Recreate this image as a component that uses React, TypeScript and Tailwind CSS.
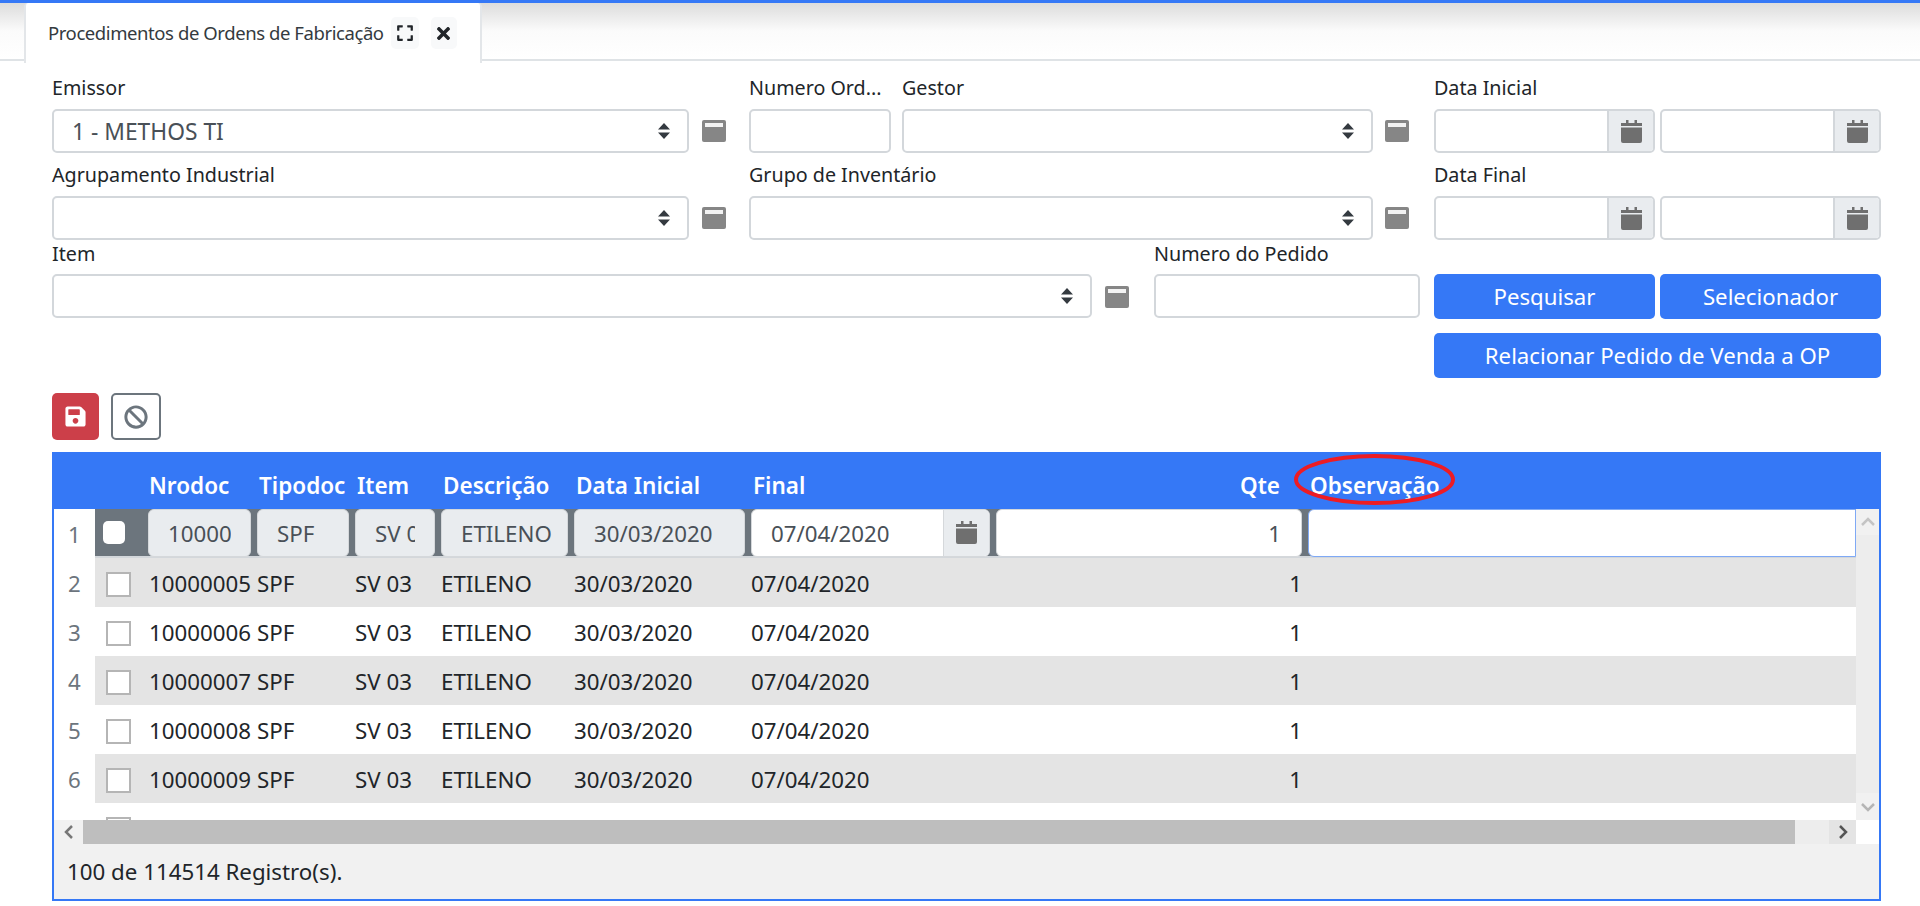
import { FaBan, FaExpand, FaSave, FaTimes } from 'react-icons/fa'

const font = { fontFamily: '"Noto Sans", "Open Sans", sans-serif' }

const SortArrows = () => (
    <svg width="12" height="16" viewBox="0 0 12 16" className="text-[#343a40]">
        <path d="M6 0 L12 6.5 L0 6.5 Z M0 9.5 L12 9.5 L6 16 Z" fill="currentColor" />
    </svg>
)

const PanelIcon = () => (
    <svg width="24" height="22" viewBox="0 0 24 22" className="shrink-0">
        <rect x="0" y="0" width="24" height="22" rx="2" fill="#868686" />
        <rect x="3" y="3" width="18" height="4" fill="#f3f3f3" />
    </svg>
)

const CalendarIcon = () => (
    <svg width="21" height="23" viewBox="0 0 21 23">
        <path
            d="M5 0h2.5v3H5zM13.5 0H16v3h-2.5zM0 3h21v3H0zM0 7.5h21V21a2 2 0 0 1-2 2H2a2 2 0 0 1-2-2z"
            fill="#6f6f6f"
        />
    </svg>
)

const Select = ({ width, value }: { width: string; value?: string }) => (
    <div
        className={`${width} flex h-[44px] shrink-0 items-center justify-between rounded-[5px] border-2 border-[#d3d7db] bg-white pl-[18px] pr-[17px] text-[22.8px] text-[#495057]`}
    >
        <span className="pt-[3px]">{value}</span>
        <SortArrows />
    </div>
)

const TextInput = ({ width }: { width: string }) => (
    <input
        readOnly
        className={`${width} h-[44px] shrink-0 rounded-[5px] border-2 border-[#d3d7db] bg-white`}
    />
)

const DateInput = () => (
    <div className="flex h-[44px] w-[221px] shrink-0 overflow-hidden rounded-[5px] border-2 border-[#d3d7db] bg-white">
        <div className="flex-1" />
        <div className="flex w-[46px] items-center justify-center border-l-2 border-[#d3d7db] bg-[#e9ecef]">
            <CalendarIcon />
        </div>
    </div>
)

const Label = ({ width, text, className }: { width: string; text: string; className: string }) => (
    <div className={`${width} ${className} shrink-0 whitespace-nowrap text-[19.7px] text-[#212529]`}>
        {text}
    </div>
)

const BlueButton = ({ width, text }: { width: string; text: string }) => (
    <button className={`${width} rounded-[5px] bg-[#3578f6] pt-[1px] text-[22.2px] text-white`}>
        {text}
    </button>
)

const rows = [
    { n: 2, doc: '10000005' },
    { n: 3, doc: '10000006' },
    { n: 4, doc: '10000007' },
    { n: 5, doc: '10000008' },
    { n: 6, doc: '10000009' },
    { n: 7, doc: '10000010' },
]

const cell = 'shrink-0 px-[3px]'
const readonlyInput =
    'h-[48px] w-full rounded-[6px] border border-[#d5d8db] bg-[#e9ecef] pl-[19px] pt-[2px] text-[22.3px] text-[#495057] outline-none'

export default function App() {
    return (
        <div className="h-[906px] w-[1920px] overflow-hidden bg-white" style={font}>
            {/* tab strip */}
            <div className="flex h-[61px] border-b-2 border-[#dfe3e6] border-t-[3px] border-t-[#3578f6] bg-gradient-to-b from-[#dcdcdc] via-[#fbfbfb] to-white pl-[24px]">
                <div className="-mb-[2px] flex h-[60px] w-[458px] items-center rounded-t-[4px] border-x-2 border-[#e3e6e9] bg-white pl-[22px]">
                    <span className="whitespace-nowrap text-[18.5px] tracking-[-0.42px] text-[#343a40]">
                        Procedimentos de Ordens de Fabricação
                    </span>
                    <span className="ml-[7px] flex h-[32px] w-[28px] items-center justify-center rounded-[5px] bg-[#f8f9fa]">
                        <FaExpand size={18} className="text-[#212529]" />
                    </span>
                    <span className="ml-[12px] flex h-[32px] w-[26px] items-center justify-center rounded-[5px] bg-[#f8f9fa]">
                        <FaTimes size={19} className="text-[#212529]" />
                    </span>
                </div>
            </div>

            {/* filters */}
            <div className="pl-[52px]">
                <div className="flex h-[48px] items-center pt-[6px]">
                    <Label width="w-[697px]" text="Emissor" className="" />
                    <Label width="w-[153px]" text="Numero Ord..." className="" />
                    <Label width="w-[532px]" text="Gestor" className="" />
                    <Label width="w-[221px]" text="Data Inicial" className="" />
                </div>
                <div className="flex items-center">
                    <Select width="w-[637px]" value="1 - METHOS TI" />
                    <span className="mx-[13px]"><PanelIcon /></span>
                    <span className="w-[10px]" />
                    <TextInput width="w-[142px]" />
                    <span className="w-[11px]" />
                    <Select width="w-[471px]" />
                    <span className="ml-[12px] mr-[25px]"><PanelIcon /></span>
                    <div className="flex gap-[5px]">
                        <DateInput />
                        <DateInput />
                    </div>
                </div>
                <div className="flex h-[43px] items-center">
                    <Label width="w-[697px]" text="Agrupamento Industrial" className="" />
                    <Label width="w-[685px]" text="Grupo de Inventário" className="" />
                    <Label width="w-[221px]" text="Data Final" className="" />
                </div>
                <div className="flex items-center">
                    <Select width="w-[637px]" />
                    <span className="mx-[13px]"><PanelIcon /></span>
                    <span className="w-[10px]" />
                    <Select width="w-[624px]" />
                    <span className="ml-[12px] mr-[25px]"><PanelIcon /></span>
                    <div className="flex gap-[5px]">
                        <DateInput />
                        <DateInput />
                    </div>
                </div>
                <div className="flex h-[34px] items-start">
                    <Label width="w-[1102px]" text="Item" className="-mt-[1px]" />
                    <Label width="w-[280px]" text="Numero do Pedido" className="-mt-[1px]" />
                </div>
                <div className="flex">
                    <Select width="w-[1040px]" />
                    <span className="ml-[13px] mr-[25px] mt-[12px]"><PanelIcon /></span>
                    <TextInput width="w-[266px]" />
                    <div className="ml-[14px] flex w-[447px] flex-col gap-[14px]">
                        <div className="flex h-[45px] gap-[5px]">
                            <BlueButton width="w-[221px]" text="Pesquisar" />
                            <BlueButton width="w-[221px]" text="Selecionador" />
                        </div>
                        <div className="flex h-[45px]">
                            <BlueButton width="w-full" text="Relacionar Pedido de Venda a OP" />
                        </div>
                    </div>
                </div>
            </div>

            {/* grid actions */}
            <div className="ml-[52px] mt-[15px] flex gap-[12px]">
                <button className="flex h-[47px] w-[47px] items-center justify-center rounded-[5px] bg-[#cc3f49]">
                    <FaSave size={23} className="text-white" />
                </button>
                <button className="flex h-[47px] w-[50px] items-center justify-center rounded-[5px] border-2 border-[#6c757d] bg-white">
                    <FaBan size={24} className="text-[#6c757d]" />
                </button>
            </div>

            {/* grid */}
            <div className="ml-[52px] mt-[12px] w-[1829px] border-2 border-t-0 border-[#3578f6] text-[22.3px]">
                <div className="flex h-[57px] items-end bg-[#3578f6] pb-[6px] text-[22.5px] font-semibold text-white">
                    <div className="w-[91px] shrink-0" />
                    <div className="w-[109px] shrink-0 pl-[4px]">Nrodoc</div>
                    <div className="w-[98px] shrink-0 pl-[5px]">Tipodoc</div>
                    <div className="w-[86px] shrink-0 pl-[5px]">Item</div>
                    <div className="w-[133px] shrink-0 pl-[5px]">Descrição</div>
                    <div className="w-[177px] shrink-0 pl-[5px]">Data Inicial</div>
                    <div className="w-[245px] shrink-0 pl-[5px]">Final</div>
                    <div className="w-[312px] shrink-0 pr-[25px] text-right">Qte</div>
                    <div className="relative pl-[5px]">
                        Observação
                        <svg
                            width="161"
                            height="51"
                            viewBox="0 0 161 51"
                            className="absolute -left-[11px] -top-[15px]"
                        >
                            <ellipse cx="80.5" cy="25.5" rx="78.5" ry="23.5" fill="none" stroke="#ed1c24" strokeWidth="4" />
                        </svg>
                    </div>
                </div>

                <div className="flex">
                    <div className="w-[1802px] shrink-0">
                        {/* body viewport clips the seventh row */}
                        <div className="h-[311px] overflow-hidden">
                            <div className="flex h-[49px] items-center">
                                <div className="w-[41px] shrink-0 pt-[2px] text-center text-[#6c757d]">1</div>
                                <div className="flex h-full flex-1 items-center border-b-2 border-[#d3d7db] bg-[#6c757d]">
                                    <div className="flex w-[50px] shrink-0 pl-[8px]">
                                        <span className="h-[23px] w-[22px] rounded-[5px] bg-white" />
                                    </div>
                                    <div className={`${cell} w-[109px]`}><input readOnly value="10000005" className={`${readonlyInput} pr-[19px]`} /></div>
                                    <div className={`${cell} w-[98px]`}><input readOnly value="SPF" className={`${readonlyInput} pr-[19px]`} /></div>
                                    <div className={`${cell} w-[86px]`}><input readOnly value="SV 03" className={`${readonlyInput} pr-[19px]`} /></div>
                                    <div className={`${cell} w-[133px]`}><input readOnly value="ETILENO" className={`${readonlyInput} pr-[8px]`} /></div>
                                    <div className={`${cell} w-[177px]`}><input readOnly value="30/03/2020" className={`${readonlyInput} pr-[8px]`} /></div>
                                    <div className={`${cell} w-[245px]`}>
                                        <div className="flex h-[48px] overflow-hidden rounded-[6px] border border-[#d5d8db] bg-white">
                                            <span className="flex-1 pl-[19px] leading-[48px] text-[#495057]">07/04/2020</span>
                                            <span className="flex w-[46px] items-center justify-center border-l border-[#d5d8db] bg-[#e9ecef]">
                                                <CalendarIcon />
                                            </span>
                                        </div>
                                    </div>
                                    <div className={`${cell} w-[312px]`}>
                                        <input readOnly value="1" className="h-[48px] w-full rounded-[6px] border border-[#d5d8db] bg-white px-[20px] pt-[2px] text-right text-[22.3px] text-[#495057] outline-none" />
                                    </div>
                                    <div className="flex-1 pl-[3px]">
                                        <input readOnly className="h-[48px] w-full rounded-l-[6px] border border-[#7fa9f5] bg-white outline-none" />
                                    </div>
                                </div>
                            </div>
                            {rows.map((r) => (
                                <div key={r.n} className="flex h-[49px] items-center">
                                    <div className="w-[41px] shrink-0 pt-[2px] text-center text-[#6c757d]">{r.n}</div>
                                    <div
                                        className={`flex h-full flex-1 items-center pt-[2px] text-[#212529] ${r.n % 2 === 0 ? 'bg-[#e4e4e4]' : 'bg-white'}`}
                                    >
                                        <div className="flex w-[50px] shrink-0 pl-[11px] pt-[2px]">
                                            <span className="h-[25px] w-[25px] border-2 border-[#b5b5b5] bg-white" />
                                        </div>
                                        <div className={`${cell} w-[109px] pl-[4px]`}>{r.doc}</div>
                                        <div className={`${cell} w-[98px]`}>SPF</div>
                                        <div className={`${cell} w-[86px]`}>SV 03</div>
                                        <div className={`${cell} w-[133px]`}>ETILENO</div>
                                        <div className={`${cell} w-[177px]`}>30/03/2020</div>
                                        <div className={`${cell} w-[245px]`}>07/04/2020</div>
                                        <div className={`${cell} w-[312px] text-right`}>1</div>
                                    </div>
                                </div>
                            ))}
                        </div>
                        {/* horizontal scrollbar */}
                        <div className="flex h-[24px] bg-[#ededed]">
                            <div className="flex w-[29px] items-center justify-center bg-[#f1f1f1]">
                                <svg width="10" height="14" viewBox="0 0 10 14"><path d="M8 1 L2 7 L8 13" fill="none" stroke="#777" strokeWidth="2.5" /></svg>
                            </div>
                            <div className="w-[1712px] bg-[#bebebe]" />
                            <div className="flex-1" />
                            <div className="flex w-[27px] items-center justify-center bg-[#e4e4e4]">
                                <svg width="10" height="14" viewBox="0 0 10 14"><path d="M2 1 L8 7 L2 13" fill="none" stroke="#555" strokeWidth="2.5" /></svg>
                            </div>
                        </div>
                    </div>
                    {/* vertical scrollbar */}
                    <div className="flex h-[311px] w-[23px] shrink-0 flex-col bg-[#ededed]">
                        <div className="flex h-[26px] items-center justify-center bg-[#f1f1f1]">
                            <svg width="14" height="10" viewBox="0 0 14 10"><path d="M1 8 L7 2 L13 8" fill="none" stroke="#c4c4c4" strokeWidth="2.5" /></svg>
                        </div>
                        <div className="flex-1" />
                        <div className="flex h-[27px] items-center justify-center bg-[#f1f1f1]">
                            <svg width="14" height="10" viewBox="0 0 14 10"><path d="M1 2 L7 8 L13 2" fill="none" stroke="#b5b5b5" strokeWidth="2.5" /></svg>
                        </div>
                    </div>
                </div>

                <div className="flex h-[55px] items-center bg-[#f1f1f1] pl-[13px] text-[22.3px] text-[#212529]">
                    100 de 114514 Registro(s).
                </div>
            </div>
        </div>
    )
}
